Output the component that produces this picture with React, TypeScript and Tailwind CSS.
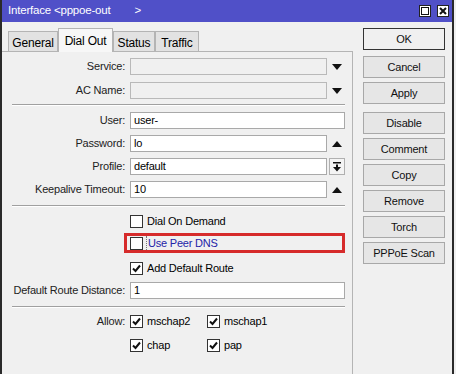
import React from 'react';

function DownArrow() {
  return (
    <svg width="10" height="6" viewBox="0 0 10 6" className="block">
      <polygon points="0,0 10,0 5,6" fill="#111" />
    </svg>
  );
}

function UpArrow() {
  return (
    <svg width="10" height="6" viewBox="0 0 10 6" className="block">
      <polygon points="0,6 10,6 5,0" fill="#111" />
    </svg>
  );
}

function CheckBox({ checked }: { checked?: boolean }) {
  return (
    <span className="w-[13px] h-[13px] shrink-0 border border-[#333] bg-white flex items-center justify-center">
      {checked && (
        <svg width="11" height="11" viewBox="0 0 11 11">
          <path d="M2 5.5 L4.5 8 L9 2.5" stroke="#111" strokeWidth="2" fill="none" />
        </svg>
      )}
    </span>
  );
}

type FieldProps = {
  label: string;
  value?: string;
  disabled?: boolean;
  side?: 'down' | 'up' | 'profile';
  className?: string;
};

function Field({ label, value, disabled, side, className }: FieldProps) {
  return (
    <div className={`flex items-center h-[17px] ${className ?? ''}`}>
      <div className="w-[124px] pr-[1px] text-right text-[#222]">{label}</div>
      <div
        className={`ml-[4px] h-[17px] flex items-center pl-[3px] border ${
          disabled ? 'bg-[#f0f0f0] border-[#b9b9b9]' : 'bg-white border-[#a9a9a9]'
        } ${side ? 'w-[197px]' : 'w-[215px]'}`}
      >
        {value}
      </div>
      {side === 'down' && (
        <div className="w-[19px] flex justify-center">
          <DownArrow />
        </div>
      )}
      {side === 'up' && (
        <div className="w-[19px] flex justify-center">
          <UpArrow />
        </div>
      )}
      {side === 'profile' && (
        <div className="ml-[2px] w-[16px] h-[17px] border border-[#b0b0b0] bg-[#f4f4f4] flex items-center justify-center">
          <svg width="10" height="10" viewBox="0 0 10 10">
            <rect x="1" y="0" width="8" height="1.5" fill="#111" />
            <rect x="4" y="2.5" width="2" height="3" fill="#111" />
            <polygon points="1,5 9,5 5,9.5" fill="#111" />
          </svg>
        </div>
      )}
    </div>
  );
}

function Separator({ className }: { className?: string }) {
  return <div className={`ml-[10px] w-[333px] h-[2px] border-t border-[#a0a0a0] border-b border-b-white ${className ?? ''}`} />;
}

function Btn({ label, primary, className }: { label: string; primary?: boolean; className?: string }) {
  return (
    <div
      className={`w-[82px] h-[22px] flex items-center justify-center text-[#111] ${
        primary ? 'border border-[#333] bg-[#f0f0f0]' : 'border border-[#a8a8a8] bg-[#e6e6e6]'
      } ${className ?? ''}`}
    >
      {label}
    </div>
  );
}

export default function App() {
  const tabs = [
    { name: 'General', w: 'w-[50px]' },
    { name: 'Dial Out', w: 'w-[55px]', active: true },
    { name: 'Status', w: 'w-[42px]' },
    { name: 'Traffic', w: 'w-[44px]' },
  ];

  return (
    <div className="w-[456px] h-[374px] bg-[#f0f0f0] overflow-hidden font-['Liberation_Sans',Arial,sans-serif] text-[11px] tracking-[-0.2px] leading-none">
      <div className="w-[454px] h-full flex flex-col border-l-2 border-r-2 border-[#2a2a2a]">
        {/* title bar */}
        <div className="h-[22px] shrink-0 bg-[#5050c8] flex items-center text-white text-[11.5px]">
          <span className="pl-[6px]">Interface &lt;pppoe-out</span>
          <span className="ml-[24px]">&gt;</span>
          <div className="ml-auto mr-[3px] flex gap-[6px]">
            <span className="w-[12px] h-[12px] bg-white border border-[#222] flex items-center justify-center">
              <span className="w-[8px] h-[8px] border border-[#111]" />
            </span>
            <span className="w-[12px] h-[12px] bg-white border border-[#222] flex items-center justify-center">
              <svg width="8" height="8" viewBox="0 0 8 8">
                <path d="M1 1 L7 7 M7 1 L1 7" stroke="#111" strokeWidth="2" />
              </svg>
            </span>
          </div>
        </div>

        <div className="flex flex-1">
          {/* left: tabs + panel */}
          <div className="w-[351px] flex flex-col">
            <div className="h-[29px] flex items-end pl-[6px]">
              {tabs.map(t =>
                t.active ? (
                  <div
                    key={t.name}
                    className={`${t.w} h-[24px] -mb-[1px] bg-[#f7f7f7] border-x border-t border-[#b4b4b4] flex items-center justify-center text-[12px] z-10`}
                  >
                    {t.name}
                  </div>
                ) : (
                  <div
                    key={t.name}
                    className={`${t.w} h-[20px] bg-[#e2e2e2] border-x border-t border-[#b4b4b4] flex items-center justify-center text-[12px] pt-[2px]`}
                  >
                    {t.name}
                  </div>
                )
              )}
            </div>
            <div className="flex-1 border-t border-r border-[#b4b4b4] flex flex-col">
              <Field label="Service:" disabled side="down" className="mt-[6px]" />
              <Field label="AC Name:" disabled side="down" className="mt-[7px]" />
              <Separator className="mt-[5px]" />
              <Field label="User:" value="user-" className="mt-[6px]" />
              <Field label="Password:" value="lo" side="up" className="mt-[6px]" />
              <Field label="Profile:" value="default" side="profile" className="mt-[6px]" />
              <Field label="Keepalive Timeout:" value="10" side="up" className="mt-[6px]" />
              <Separator className="mt-[7px]" />

              <div className="mt-[3px] h-[22px] flex items-center pl-[128px] gap-[4px]">
                <CheckBox />
                <span>Dial On Demand</span>
              </div>
              <div className="mt-[1px] ml-[122px] w-[221px] h-[20px] border-[3px] border-[#d62b2b] flex items-center pl-[3px] gap-[3px]">
                <CheckBox />
                <span className="text-[#2323a8] border-l border-dotted border-[#777] pl-[1px] h-[14px] flex items-center">
                  Use Peer DNS
                </span>
              </div>
              <div className="mt-[4px] h-[22px] flex items-center pl-[128px] gap-[4px]">
                <CheckBox checked />
                <span>Add Default Route</span>
              </div>
              <Field label="Default Route Distance:" value="1" className="mt-[3px]" />
              <Separator className="mt-[7px]" />

              <div className="mt-[3px] h-[20px] flex items-center">
                <div className="w-[124px] pr-[1px] text-right text-[#222]">Allow:</div>
                <div className="ml-[4px] w-[77px] flex items-center gap-[4px]">
                  <CheckBox checked />
                  <span>mschap2</span>
                </div>
                <div className="flex items-center gap-[4px]">
                  <CheckBox checked />
                  <span>mschap1</span>
                </div>
              </div>
              <div className="mt-[4px] h-[20px] flex items-center pl-[128px]">
                <div className="w-[77px] flex items-center gap-[4px]">
                  <CheckBox checked />
                  <span>chap</span>
                </div>
                <div className="flex items-center gap-[4px]">
                  <CheckBox checked />
                  <span>pap</span>
                </div>
              </div>
            </div>
          </div>

          {/* right: buttons */}
          <div className="flex flex-col pl-[10px]">
            <Btn label="OK" primary className="mt-[6px]" />
            <Btn label="Cancel" className="mt-[6px]" />
            <Btn label="Apply" className="mt-[4px]" />
            <Btn label="Disable" className="mt-[8px]" />
            <Btn label="Comment" className="mt-[4px]" />
            <Btn label="Copy" className="mt-[4px]" />
            <Btn label="Remove" className="mt-[4px]" />
            <Btn label="Torch" className="mt-[4px]" />
            <Btn label="PPPoE Scan" className="mt-[4px]" />
          </div>
        </div>
      </div>
    </div>
  );
}
